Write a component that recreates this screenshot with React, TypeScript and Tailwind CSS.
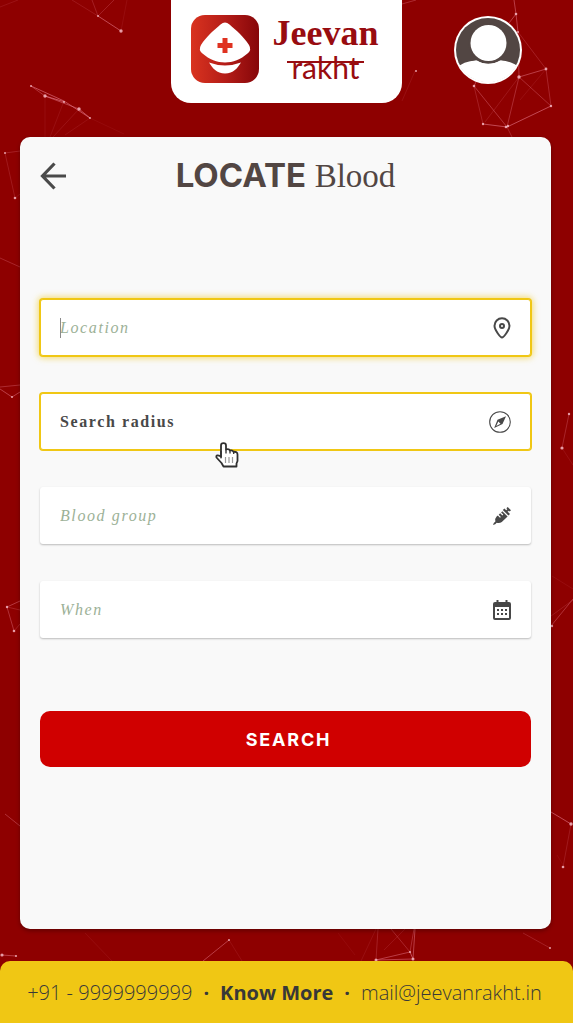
import type { ReactNode } from "react";

type Segment = [number, number, number, number, number];

const segments: Segment[] = [
  [98, 16, 121, 31, 0.6], [98, 16, 72, 0, 0.18], [98, 16, 92, 0, 0.25], [98, 16, 114, 0, 0.25], [121, 31, 127, 0, 0.1],
  [0, 7, 18, 0, 0.15], [31, 86, 64, 101, 0.6], [31, 86, 45, 96, 0.4], [45, 96, 65, 102, 0.7], [45, 96, 79, 109, 0.5],
  [64, 101, 90, 118, 0.6], [79, 109, 90, 118, 0.6], [45, 96, 45, 137, 0.1], [64, 101, 50, 137, 0.12], [79, 109, 53, 137, 0.15],
  [90, 118, 65, 135, 0.12], [90, 118, 124, 134, 0.08],
  [402, 4, 416, 0, 0.35], [402, 101, 415, 71, 0.12], [514, 0, 516, 14, 0.5], [516, 14, 518, 32, 0.5], [516, 14, 509, 23, 0.5],
  [518, 32, 519, 77, 0.4], [518, 32, 546, 69, 0.25], [519, 77, 546, 69, 0.5], [546, 69, 551, 106, 0.3], [519, 77, 551, 106, 0.35],
  [519, 77, 507, 127, 0.35], [519, 77, 485, 122, 0.18], [474, 86, 507, 127, 0.4], [474, 86, 483, 124, 0.25], [483, 124, 507, 127, 0.6],
  [507, 127, 551, 106, 0.6], [507, 127, 512, 137, 0.3], [476, 82, 474, 86, 0.5], [546, 69, 520, 100, 0.12],
  [5, 153, 15, 198, 0.2], [5, 153, 20, 151, 0.25], [15, 198, 20, 194, 0.15], [0, 258, 20, 267, 0.3], [0, 387, 20, 385, 0.35],
  [0, 389, 12, 397, 0.5], [12, 397, 20, 392, 0.5], [7, 607, 20, 601, 0.45], [7, 607, 14, 631, 0.4], [7, 607, 20, 610, 0.25],
  [14, 631, 20, 624, 0.25], [5, 814, 20, 826, 0.4],
  [569, 414, 562, 448, 0.3], [562, 448, 573, 465, 0.12], [551, 626, 573, 599, 0.4], [551, 616, 573, 600, 0.2], [552, 576, 573, 589, 0.1],
  [551, 812, 571, 824, 0.6], [571, 824, 563, 867, 0.2], [557, 855, 565, 868, 0.08],
  [2, 955, 16, 956, 0.5], [85, 933, 112, 961, 0.1], [203, 961, 229, 940, 0.5], [229, 940, 242, 961, 0.12],
  [376, 960, 410, 952, 0.5], [376, 960, 413, 959, 0.5], [410, 952, 413, 959, 0.6], [376, 960, 378, 929, 0.25],
  [410, 952, 391, 929, 0.3], [410, 952, 414, 929, 0.35], [413, 959, 415, 929, 0.5], [384, 950, 405, 929, 0.15],
  [376, 929, 361, 961, 0.12], [338, 933, 355, 955, 0.08], [523, 933, 550, 948, 0.25],
];

const dots: [number, number, number][] = [
  [98, 16, 1], [121, 31, 1.7], [31, 86, 1], [45, 96, 1.7], [64, 102, 1], [79, 109, 1.7], [90, 118, 1],
  [416, 71, 1], [516, 14, 1.3], [518, 32, 1], [519, 77, 1.7], [546, 69, 1.4], [551, 106, 1.2], [474, 86, 1.3],
  [483, 124, 1.2], [506, 127, 1.3], [508, 126, 1.2], [5, 153, 1], [15, 198, 1.3], [12, 397, 1], [7, 607, 1.2], [14, 631, 1.3],
  [569, 414, 1.2], [562, 448, 1.6], [552, 626, 1.2], [571, 824, 1.7], [563, 867, 1.3], [2, 955, 1.6], [16, 956, 1.1],
  [229, 940, 1], [376, 960, 1.5], [410, 952, 1.1], [413, 959, 1.5], [550, 948, 1],
];

function Constellation() {
  return (
    <svg aria-hidden="true" viewBox="0 0 573 1023" preserveAspectRatio="xMidYMid slice" className="absolute inset-0 h-full w-full">
      {segments.map(([x1, y1, x2, y2, o], i) => (
        <line key={i} x1={x1} y1={y1} x2={x2} y2={y2} stroke="#e7798b" strokeWidth="1" opacity={o} />
      ))}
      {dots.map(([cx, cy, r], i) => (
        <circle key={i} cx={cx} cy={cy} r={r} fill="#f3b6c1" opacity="0.85" />
      ))}
    </svg>
  );
}

function LogoMark() {
  return (
    <svg viewBox="0 0 68 68" className="size-17" aria-hidden="true">
      <defs>
        <linearGradient id="mark" x1="0" y1="0" x2="1" y2="0">
          <stop offset="0" stopColor="#d9331f" />
          <stop offset="0.5" stopColor="#b51d18" />
          <stop offset="1" stopColor="#860609" />
        </linearGradient>
      </defs>
      <rect width="68" height="68" rx="14" fill="url(#mark)" />
      <path d="M29.5 9.5Q34 5.5 38.500 9.500C45 15 53 22 58 30Q61 35 56.500 38.500C43 50.500 25 50.500 11.500 38.500Q7 35 10 30C15 22 23 15 29.500 9.500Z" fill="#fff" />
      <path d="M18 47.500Q34 53.500 50 47.500C46.500 53 42.500 58.500 34 58.500C25.500 58.500 21.500 53 18 47.500Z" fill="#fff" />
      <path d="M31.500 23h5v5h5v5h-5v5h-5v-5h-5v-5h5Z" fill="#df3221" />
    </svg>
  );
}

function Avatar() {
  return (
    <svg viewBox="0 0 68 68" className="size-17" aria-hidden="true">
      <clipPath id="face">
        <circle cx="34" cy="34" r="32.500" />
      </clipPath>
      <circle cx="34" cy="34" r="34" fill="#fff" />
      <circle cx="34" cy="34" r="32" fill="#524643" />
      <g clipPath="url(#face)" fill="#fff">
        <path d="M0 68V54Q9 45 22 44.500Q34 51 47 44.500Q59 45 68 54V68Z" />
        <circle cx="34.500" cy="27" r="20" fill="#524643" />
        <circle cx="34.500" cy="27" r="18" />
        <path d="M17 45.500L23 44.500Q34.500 52 46 44.500L52 45.500V60H17Z" />
      </g>
    </svg>
  );
}

function PinIcon() {
  return (
    <svg viewBox="0 0 18 22" className="h-5.5 w-4.5" fill="none" stroke="#484848" aria-hidden="true">
      <path d="M9 20.500C7.500 20.500 1.500 13 1.500 8.800A7.500 7.500 0 0 1 16.500 8.800C16.500 13 10.500 20.500 9 20.500Z" strokeWidth="2" />
      <circle cx="9" cy="9" r="2" strokeWidth="2" />
    </svg>
  );
}

function CompassIcon() {
  return (
    <svg viewBox="0 0 22 22" className="size-5.5" aria-hidden="true">
      <circle cx="11" cy="11" r="10.300" fill="none" stroke="#484848" strokeWidth="1.100" />
      <path d="M17 5.200L13.500 13L5.200 16.900L8.500 8.800Z" fill="#484848" />
      <path d="M9.300 10.600L11.500 12.700L7.200 14.900Z" fill="#fff" />
    </svg>
  );
}

function SyringeIcon() {
  return (
    <svg viewBox="0 0 18 18" className="size-4.5" fill="#484848" aria-hidden="true">
      <path d="M0 18L0.800 16L2.400 14.500Q1.800 11.300 3.600 9.600L4.800 8.600L7 10.800L7.900 9.900L5.700 7.700L7.200 6.300L9.400 8.500L10.300 7.600L8.100 5.400L9.300 4.300L14.600 9.600L8.800 15Q6.600 16.700 3.700 15.800L2.200 17.200Z" />
      <path d="M9.800 2.900L11.400 1.400L17 7L15.400 8.500Z" />
      <path d="M12.900 3.600L14.300 2.200L13.400 1.300L14.700 0L18 3.300L16.700 4.600L15.800 3.700L14.400 5.100Z" />
    </svg>
  );
}

function CalendarIcon() {
  return (
    <svg viewBox="0 0 18 20" className="h-5 w-4.5" fill="#484848" aria-hidden="true">
      <path fillRule="evenodd" d="M3.500 0h2v2h7V0h2v2H16a2 2 0 0 1 2 2v14a2 2 0 0 1-2 2H2a2 2 0 0 1-2-2V4a2 2 0 0 1 2-2h1.500ZM2 7v11h14V7Z" />
      <path d="M4 9h2v2H4zM8 9h2v2H8zM12 9h2v2h-2zM4 13h2v2H4zM8 13h2v2H8zM12 13h2v2h-2z" />
    </svg>
  );
}

function HandPointer() {
  return (
    <svg viewBox="0 0 24 26" className="pointer-events-none absolute top-12 left-[174px] z-10 h-6.5 w-6" aria-hidden="true">
      <path
        d="M6 15.500V3.500Q6 1.200 8.500 1.200Q11 1.200 11 3.500V7.500Q14 6.500 15 8.500Q17.500 7.800 18.500 9.800Q22.500 9.300 22.500 12.500V19L21.500 21.500V24.500H8.500L6.500 21L1.500 15.500Q0.500 12 6 14.500Z"
        fill="#fff" stroke="#303030" strokeWidth="1.800" strokeLinejoin="round"
      />
      <path d="M6 9v6M11 7.500v4M15 8.500v3M18.700 10v2" stroke="#303030" strokeWidth="1.300" />
      <path d="M10.500 15v6M14 15v6M17.500 15v6" stroke="#999" strokeWidth="1.200" />
    </svg>
  );
}

const plain = "border-transparent shadow-[0_1px_2px_rgba(0,0,0,0.25)]";
const outlined = "border-[#f0c714] ring-1 ring-[#f0c714]";
const glowing = "border-[#f0c714] ring-1 ring-[#f0c714] shadow-[0_0_6px_2px_rgba(240,199,20,0.6)]";
const faint = "placeholder:italic placeholder:text-[#9cb197]";
const strong = "font-bold placeholder:text-[#484848]";

function Field(props: { name: string; frame: string; tone: string; icon: ReactNode; children?: ReactNode }) {
  return (
    <label className={`relative flex h-[57px] items-center rounded-[3px] border bg-white px-[19px] ${props.frame}`}>
      {props.children}
      <input
        type="text"
        aria-label={props.name}
        placeholder={props.name}
        className={`min-w-0 flex-1 bg-transparent font-['Liberation_Serif',serif] text-base tracking-widest text-[#484848] outline-none placeholder:opacity-100 ${props.tone}`}
      />
      {props.icon}
    </label>
  );
}

export default function App() {
  return (
    <div className="relative flex min-h-screen flex-col bg-[#8e0000] font-['Open_Sans',sans-serif]">
      <Constellation />

      <header className="relative grid grid-cols-[1fr_auto_1fr]">
        <a href="#home" className="col-start-2 flex h-[103px] items-start gap-3.5 rounded-b-[20px] bg-white pt-[15px] pr-6 pl-5">
          <LogoMark />
          <span className="flex flex-col items-center text-[#980c10]">
            <span className="font-['Liberation_Serif',serif] text-4xl leading-9 font-bold">Jeevan</span>
            <span className="relative px-1 font-['Lato',sans-serif] text-[30px] leading-8">
              rakht
              <span className="absolute inset-x-0 top-2.5 h-0.5 bg-[#980c10]" />
            </span>
          </span>
        </a>
        <button type="button" aria-label="Profile" className="mt-4 size-17 justify-self-center rounded-full">
          <Avatar />
        </button>
      </header>

      <main className="relative mt-[34px] mr-[22px] mb-8 ml-5 flex flex-1 flex-col rounded-[10px] bg-[#f9f9f9] px-5 pt-[18px] shadow-[0_2px_4px_rgba(0,0,0,0.3)]">
        <div className="grid grid-cols-[32px_1fr_32px] items-center">
          <button type="button" aria-label="Back" className="h-10">
            <svg viewBox="0 0 26 28" className="h-7 w-6.5" fill="none" stroke="#4a4a4a" strokeWidth="3.200" aria-hidden="true">
              <path d="M26 14H2.500M14.500 1.500L2.500 14L14.500 26.500" />
            </svg>
          </button>
          <h1 className="text-center text-[33px] leading-10 text-[#524643]">
            <span className="font-['Inter',sans-serif] font-bold">LOCATE</span>{" "}
            <span className="font-['Liberation_Serif',serif]">Blood</span>
          </h1>
        </div>

        <form className="mt-[103px] flex flex-col gap-[37px] pb-10" onSubmit={(e) => e.preventDefault()}>
          <Field name="Location" frame={glowing} tone={faint} icon={<PinIcon />}>
            <span className="absolute left-[19px] h-5 w-px bg-[#8a8a8a]" />
          </Field>
          <Field name="Search radius" frame={outlined} tone={strong} icon={<CompassIcon />}>
            <HandPointer />
          </Field>
          <Field name="Blood group" frame={plain} tone={faint} icon={<SyringeIcon />} />
          <Field name="When" frame={plain} tone={faint} icon={<CalendarIcon />} />
          <button type="submit" className="mt-9 h-14 rounded-[10px] bg-[#d00000] pt-0.5 pl-1.5 font-['Inter',sans-serif] text-lg font-bold tracking-widest text-white">
            SEARCH
          </button>
        </form>
      </main>

      <footer className="relative flex min-h-[62px] flex-wrap items-center justify-center gap-x-[11px] rounded-t-[10px] bg-[#f0c714] pt-0.5 pr-5 pl-4 text-xl font-light text-[#383838]">
        <a href="tel:+919999999999">+91 - 9999999999</a>
        <span className="font-bold">·</span>
        <a href="#about" className="font-bold">Know More</a>
        <span className="font-bold">·</span>
        <a href="mailto:mail@jeevanrakht.in">mail@jeevanrakht.in</a>
      </footer>
    </div>
  );
}
